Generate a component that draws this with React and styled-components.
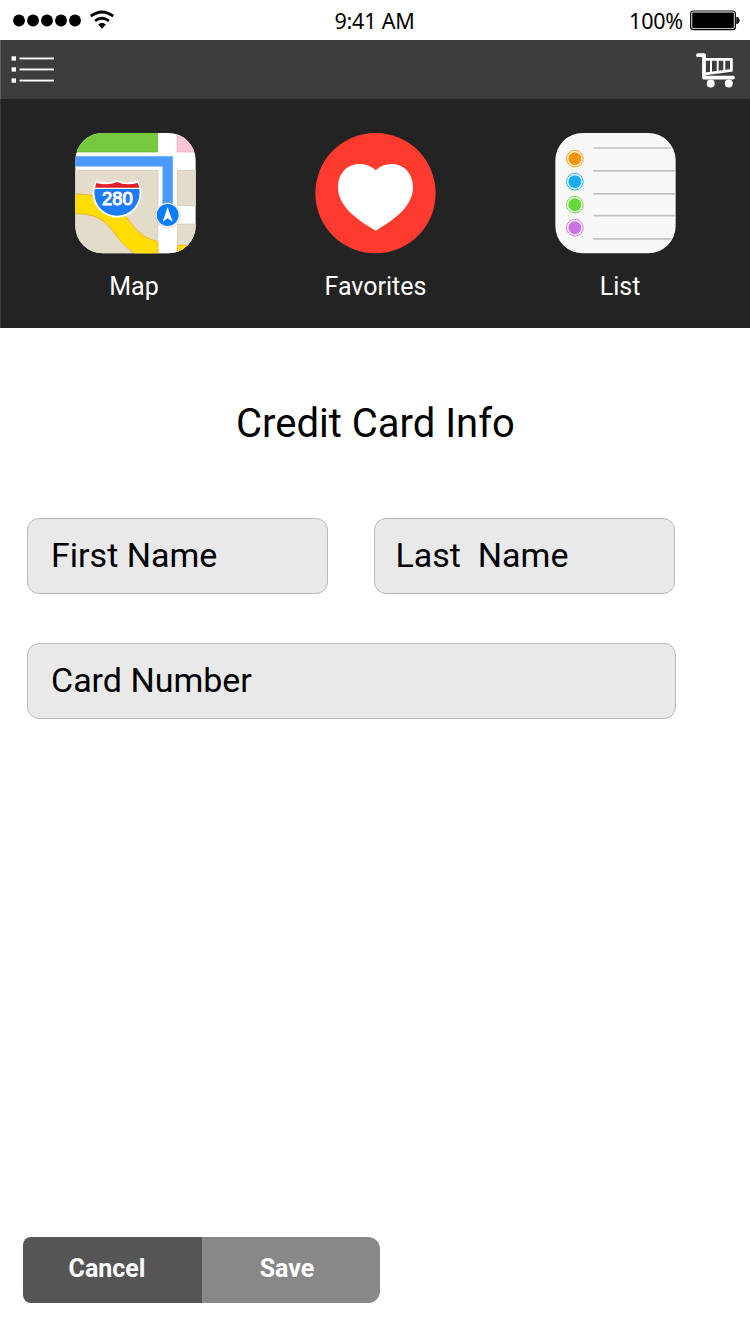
import React from "react";
import styled, { createGlobalStyle } from "styled-components";

const GlobalStyle = createGlobalStyle`
  * { box-sizing: border-box; }
  body { margin: 0; background: #fff; }
`;

const Screen = styled.div`
  width: 750px;
  height: 1334px;
  display: flex;
  flex-direction: column;
  background: #fff;
  color: #000;
  font-family: Roboto, sans-serif;
`;

const StatusBar = styled.header`
  height: 40px;
  display: grid;
  grid-template-columns: 1fr auto 1fr;
  align-items: start;
  padding: 0 9px 0 11px;
  font: 21.5px/42px "Noto Sans", sans-serif;
`;

const StatusGroup = styled.div`
  display: flex;
  justify-content: ${(p) => (p.$end ? "flex-end" : "flex-start")};
  gap: 6px;
`;

const StatusText = styled.span`
  white-space: nowrap;
  padding-right: ${(p) => p.$right || 0}px;
  letter-spacing: ${(p) => p.$spacing || "0"};
`;

const NavBar = styled.nav`
  height: 59px;
  display: flex;
  justify-content: space-between;
  background: #3d3d3d;
  border-left: 1px solid #606060;
`;

const Shortcuts = styled.section`
  height: 229px;
  padding: 34px 14px 0 14px;
  display: grid;
  grid-template-columns: repeat(3, 240px);
  background: #232323;
  border-left: 1px solid #3a3a3a;
`;

const Shortcut = styled.div`
  display: flex;
  flex-direction: column;
  align-items: center;
`;

const ShortcutLabel = styled.span`
  margin-top: 17px;
  padding-left: ${(p) => p.$left || 0}px;
  padding-right: ${(p) => p.$right || 0}px;
  font-size: 25px;
  line-height: 32px;
  color: #fff;
`;

const Form = styled.main`
  flex: 1;
  display: flex;
  flex-direction: column;
  padding: 72px 0 0 27px;
`;

const Title = styled.h1`
  margin: 0 26px 70px 0;
  font-size: 40px;
  font-weight: 400;
  line-height: 48px;
  text-align: center;
`;

const FieldRow = styled.div`
  display: flex;
  gap: 46px;
  margin-bottom: 49px;
`;

const Field = styled.div`
  width: ${(p) => p.$width}px;
  height: 76px;
  padding-left: ${(p) => p.$inset}px;
  border: 1px solid #b9b9b9;
  border-radius: 12px;
  background: #e9e9e9;
  font-size: 34px;
  line-height: 73px;
  white-space: pre;
`;

const Actions = styled.footer`
  display: flex;
  padding: 0 0 31px 23px;
`;

const Button = styled.button`
  width: ${(p) => p.$width}px;
  height: 66px;
  border: 0;
  padding: 0 ${(p) => p.$right}px 2px 0;
  border-radius: ${(p) => p.$radius};
  background: ${(p) => p.$color};
  color: #fff;
  font: 700 25px/32px Roboto, sans-serif;
`;

const Icon = styled.svg`
  display: block;
  flex: none;
`;

const SignalIcon = () => (
  <Icon width="108" height="40" viewBox="11 0 108 40">
    {[19, 33, 47, 61, 75].map((x) => (
      <circle key={x} cx={x} cy="20.5" r="5.9" />
    ))}
    <g fill="none" stroke="#000" strokeWidth="2.7">
      <path d="M90.8 16.2Q102 7.8 113.2 16.2" />
      <path d="M95 20.9Q102 15.6 109 20.9" />
    </g>
    <path d="M98.2 24.4Q102 21.8 105.8 24.4L102 28.8Z" />
  </Icon>
);

const BatteryIcon = () => (
  <Icon width="52" height="40" viewBox="689 0 52 40">
    <rect x="690.7" y="11" width="44.6" height="18.6" rx="2.6" fill="none" stroke="#000" strokeWidth="1.2" />
    <rect x="692.2" y="12.5" width="41.6" height="15.8" rx="1" />
    <path d="M736.3 16.8Q739.6 17.6 739.6 20.5T736.3 24.2Z" />
  </Icon>
);

const MenuIcon = () => (
  <Icon width="60" height="58" viewBox="1 40 60 58">
    {[58.4, 69.4, 80.5].map((y) => (
      <g key={y} fill="#fff">
        <rect x="11.6" y={y - 2.1} width="4.4" height="4.3" />
        <rect x="19.6" y={y - 0.9} width="34.4" height="1.9" />
      </g>
    ))}
  </Icon>
);

const CartIcon = () => (
  <Icon width="60" height="58" viewBox="690 40 60 58">
    <g fill="none" stroke="#fff" strokeLinecap="round" strokeLinejoin="round">
      <path strokeWidth="3.8" d="M698 55.2H704V77.6H733" />
      <path strokeWidth="2.8" d="M705 59.3H731.4V70.4L705 73.9" />
      <path strokeWidth="2" strokeLinecap="butt" d="M711 59.6V73M717.7 59.6V72M724.3 59.6V71.5" />
    </g>
    <g fill="#fff">
      <circle cx="710.7" cy="83.6" r="4" />
      <circle cx="728.8" cy="83.6" r="4" />
    </g>
  </Icon>
);

const MapIcon = () => (
  <Icon width="121" height="121" viewBox="30 24 363 363">
    <clipPath id="tile">
      <rect x="31" y="24" width="361" height="361" rx="82" />
    </clipPath>
    <g clipPath="url(#tile)">
      <rect x="30" y="23" width="363" height="363" fill="#fff" />
      <path fill="#76c83f" stroke="#67b136" strokeWidth="2" d="M25 15H278V81H25Z" />
      <path fill="#fac5d4" stroke="#dfafbb" strokeWidth="2" d="M336 15H400V81H336Z" />
      <g fill="#e3dccb" stroke="#cfc7b4" strokeWidth="2">
        <path d="M25 136H279V400H25Z" />
        <path d="M337 136H400V242H337Z" />
        <path d="M337 297H400V400H337Z" />
      </g>
      <path fill="#ffdd00" stroke="#f4ae3c" strokeWidth="3" d="M24 207C75 206 109 215 139 238C169 261 183 274 202 300C224 328 250 343 279 350V400H230Q185 373 157 336C120 285 99 266 25 266Z" />
      <path fill="#ffdd00" stroke="#f4ae3c" strokeWidth="3" d="M337 361H400V400H337Z" />
      <rect x="281" y="230" width="54" height="160" fill="#fff" />
      <path fill="none" stroke="#4a9aff" strokeWidth="31" d="M20 109H308V260" />
      <path fill="#fff" d="M93 166C116 175 139 173 156 164C175 174 195 175 219 166Q222 177 228 190C236 240 199 278 156 278C114 278 75 240 84 190Q90 177 93 166Z" />
      <path fill="#df2029" d="M94 174Q130 183 156 171Q182 183 218 174L223 188H90Z" />
      <path fill="#1d7cf8" d="M89 192H223C229 238 197 271 156 272C115 271 83 238 89 192Z" />
      <text x="157" y="241" textAnchor="middle" fontFamily="Liberation Sans, sans-serif" fontSize="55" fill="#fff" stroke="#fff" strokeWidth="3">280</text>
      <circle cx="308" cy="271" r="39" fill="#c9c5bd" opacity=".55" />
      <circle cx="308" cy="270" r="36" fill="#fff" />
      <circle cx="308" cy="270" r="33" fill="#0a7cff" />
      <path fill="#fff" d="M308 246L323 290L308 280L293 290Z" />
    </g>
  </Icon>
);

const HeartIcon = () => (
  <Icon width="121" height="121" viewBox="30 24 363 363">
    <circle cx="211.5" cy="204.5" r="180.5" fill="#ff3b30" />
    <path fill="#fff" d="M212 136C199 123 182 117 163 117C126 117 99 146 99 187C99 242 153 284 212 317C271 284 324 242 324 187C324 146 297 117 260 117C241 117 225 123 212 136Z" />
  </Icon>
);

const BULLETS = [
  [101, "#ff9500"],
  [170, "#1badf8"],
  [239, "#63da38"],
  [308, "#cc73e1"],
];

const ListIcon = () => (
  <Icon width="121" height="121" viewBox="30 24 363 363">
    <rect x="31" y="24" width="361" height="361" rx="82" fill="#f8f8f8" />
    <path stroke="#c2c2c2" strokeWidth="5" d="M145 69H378M145 137.5H391M145 206.5H392M145 272H391M145 341.5H379" />
    {BULLETS.map(([y, color]) => (
      <g key={y}>
        <circle cx="89.5" cy={y} r="25" fill="#fff" stroke={color} strokeWidth="3" />
        <circle cx="89.5" cy={y} r="19.5" fill={color} />
      </g>
    ))}
  </Icon>
);

export default function App() {
  return (
    <>
      <GlobalStyle />
      <Screen>
        <StatusBar>
          <StatusGroup>
            <SignalIcon />
          </StatusGroup>
          <StatusText $spacing="-0.2px" $right={3}>9:41 AM</StatusText>
          <StatusGroup $end>
            <StatusText $spacing="-0.2px">100%</StatusText>
            <BatteryIcon />
          </StatusGroup>
        </StatusBar>
        <NavBar>
          <MenuIcon />
          <CartIcon />
        </NavBar>
        <Shortcuts>
          <Shortcut>
            <MapIcon />
            <ShortcutLabel $right={2}>Map</ShortcutLabel>
          </Shortcut>
          <Shortcut>
            <HeartIcon />
            <ShortcutLabel $left={1}>Favorites</ShortcutLabel>
          </Shortcut>
          <Shortcut>
            <ListIcon />
            <ShortcutLabel $left={10}>List</ShortcutLabel>
          </Shortcut>
        </Shortcuts>
        <Form>
          <Title>Credit Card Info</Title>
          <FieldRow>
            <Field $width={301} $inset={23}>First Name</Field>
            <Field $width={301} $inset={20.5}>{"Last  Name"}</Field>
          </FieldRow>
          <Field $width={649} $inset={23}>Card Number</Field>
        </Form>
        <Actions>
          <Button $width={179} $right={11} $color="#555" $radius="8px 0 0 8px">Cancel</Button>
          <Button $width={178} $right={8} $color="#888" $radius="0 12px 12px 0">Save</Button>
        </Actions>
      </Screen>
    </>
  );
}
